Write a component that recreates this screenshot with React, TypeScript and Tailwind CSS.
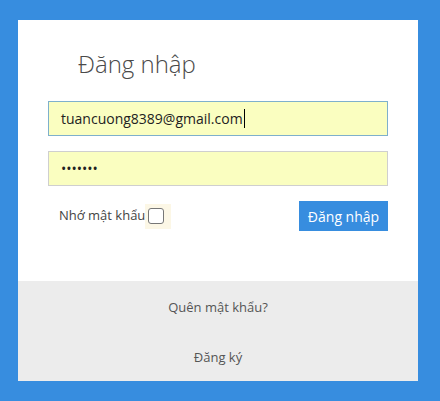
export default function App() {
  return (
    <div className="w-[440px] h-[401px] bg-[#378ddf] pt-[20px] pl-[18px] font-['Open_Sans',sans-serif]">
      <div className="w-[400px] h-[361px] bg-white flex flex-col">
        <div className="h-[261px] pt-[28px] px-[30px]">
          <h1 className="pl-[30px] text-[24px] font-light leading-[32px] text-[#4a4a4a]">Đăng nhập</h1>
          <div className="mt-[21px] h-[35px] border border-[#7eb0cc] bg-[#fafec0] flex items-center px-[12px] text-[14px] text-[#222]">
            tuancuong8389@gmail.com
            <span className="w-px h-[19px] bg-black ml-[1px]" />
          </div>
          <div className="mt-[15px] h-[35px] border border-[#cfcfcf] bg-[#fafec0] flex items-center px-[12px] text-[14px] text-[#222]">
            •••••••
          </div>
          <div className="mt-[15px] flex items-center justify-between">
            <label className="flex items-center pl-[11px] text-[13px] text-[#444]">
              Nhớ mật khẩu
              <span className="w-[26px] h-[25px] bg-[#fcf7e6] flex items-center pl-[3px]">
                <span className="w-[16px] h-[16px] rounded-[3px] border border-[#777] bg-white" />
              </span>
            </label>
            <button className="w-[89px] h-[30px] bg-[#378ddf] text-white text-[14px]">Đăng nhập</button>
          </div>
        </div>
        <div className="flex-1 bg-[#ececec] flex flex-col items-center text-[13px] text-[#555]">
          <a className="mt-[17px]">Quên mật khẩu?</a>
          <a className="mt-[30px]">Đăng ký</a>
        </div>
      </div>
    </div>
  );
}
